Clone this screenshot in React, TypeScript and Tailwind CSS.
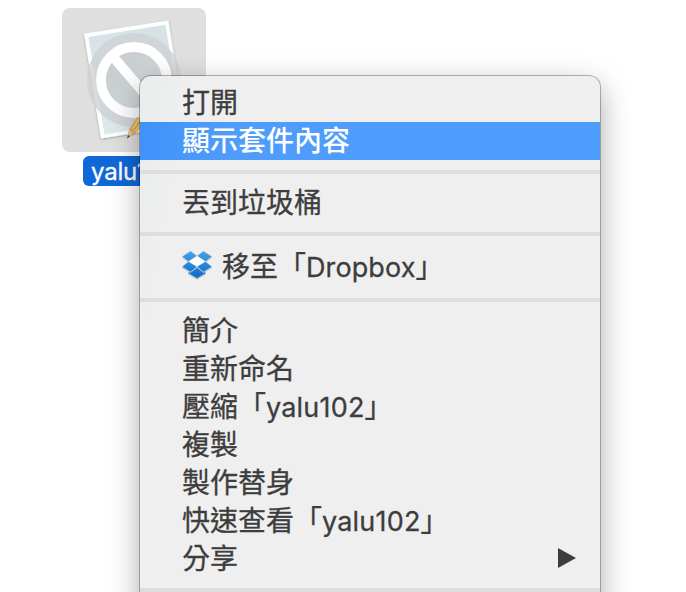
import React from "react";

function BundleIcon() {
  return (
    <svg viewBox="62 8 144 144" className="block h-36 w-36">
      <defs>
        <linearGradient id="paper" x1="0" y1="0" x2="0" y2="1">
          <stop offset="0" stopColor="#d6e2e6" />
          <stop offset="1" stopColor="#dce8eb" />
        </linearGradient>
        <linearGradient id="lens" x1="0" y1="0" x2="1" y2="1">
          <stop offset="0" stopColor="#c3c9cc" />
          <stop offset="1" stopColor="#d8dcde" />
        </linearGradient>
        <filter id="lift" x="-10%" y="-10%" width="120%" height="120%">
          <feDropShadow dx="0" dy="1" stdDeviation="1" floodOpacity="0.3" />
        </filter>
      </defs>
      <polygon points="84,33.8 168.3,20.5 185,125 101,138.5" fill="#fdfefe" filter="url(#lift)" />
      <polygon points="88.5,37 165.5,24.8 181,122 104.5,134.5" fill="url(#paper)" />
      <circle cx="134" cy="80" r="47" fill="#ced1d3" fillOpacity="0.8" />
      <circle cx="134" cy="80" r="33" fill="url(#lens)" stroke="#fff" strokeWidth="9.8" />
      <path d="M112 55.500L156 107" stroke="#fff" strokeWidth="9.8" />
      <path d="M137.500 117L146 122L135 134L127.500 138L129 129Z" fill="#ddb064" />
      <path d="M138 118L145 122L136 132L132 129Z" fill="#efce72" />
      <path d="M141 119.500L134 130" stroke="#bd9146" strokeWidth="1" />
      <path d="M129 130L133 133L127.500 138Z" fill="#e6c5a2" />
      <path d="M128 135L130 136.300L127 138.700Z" fill="#454545" />
    </svg>
  );
}

function DropboxIcon() {
  return (
    <svg viewBox="0 0 30 28" className="mr-[10px] block h-7 w-[30px] shrink-0 overflow-visible">
      <defs>
        <linearGradient id="box" x1="0" y1="0" x2="0" y2="28" gradientUnits="userSpaceOnUse">
          <stop offset="0" stopColor="#4ba0e7" />
          <stop offset="1" stopColor="#0868c9" />
        </linearGradient>
      </defs>
      <g stroke="#fff" strokeWidth="0.3" style={{ filter: "drop-shadow(0 1px 0.6px #0003)" }}>
        <path d="M15 5L24 10.500L15 16L6 10.500Z" fill="#fff" />
        <path d="M8.500 0L15 4.800L6.500 10.500L0 5.500Z" fill="url(#box)" />
        <path d="M21.500 0L30 5.500L23.500 10.500L15 4.800Z" fill="url(#box)" />
        <path d="M6.500 10.500L15 15.800L8.500 21L0 15.800Z" fill="url(#box)" />
        <path d="M23.500 10.500L30 15.800L21.500 21L15 15.800Z" fill="url(#box)" />
        <path d="M6.500 20.300L8.500 21.500L15 16.500L21.500 21.500L23.500 20.300V22.500L15 27.500L6.500 22.500Z" fill="url(#box)" />
      </g>
    </svg>
  );
}

function Latin({ children, className = "" }: { children: string; className?: string }) {
  return <span className={`font-['Inter'] text-[27px] leading-none ${className}`}>{children}</span>;
}

function Item({ children, className = "" }: { children: React.ReactNode; className?: string }) {
  return (
    <div className={`flex h-[38px] shrink-0 items-center whitespace-pre pb-1 pl-[42px] ${className}`}>{children}</div>
  );
}

function Separator() {
  return (
    <div className="flex h-6 shrink-0 items-center">
      <div className="h-1 w-full bg-[#dedede]" />
    </div>
  );
}

export default function App() {
  return (
    <div
      lang="zh-Hant"
      className="relative h-[592px] w-[686px] overflow-hidden bg-white font-['Noto_Sans_CJK_TC',sans-serif] text-[28px] leading-[38px] text-[#3d3d3d] [-webkit-text-stroke:0.3px]"
    >
      <div className="flex w-[206px] flex-col pl-[62px] pt-2">
        <div className="h-36 w-36 overflow-hidden rounded-lg bg-[#dfdfdf]">
          <BundleIcon />
        </div>
        <div className="ml-[21px] mt-1 h-[30px] w-[102px] rounded-md bg-[#1068d8] pl-2 font-['Inter'] text-[24px] leading-[31px] tracking-[-0.2px] text-white">
          yalu102
        </div>
      </div>

      <div className="absolute left-[140px] top-[76px] flex h-[560px] w-[460px] flex-col overflow-hidden rounded-t-[11px] bg-[#efefef] bg-[linear-gradient(100deg,#e9eded_0,#efefef_50px)] pt-2 shadow-[0_0_0_1px_#00000045,0_10px_30px_#00000058]">
        <Item>打開</Item>
        <Item className="bg-[#4e9cfb] bg-[linear-gradient(90deg,#4292fa,#4e9cfb_90px)] font-medium text-white [-webkit-text-stroke:0]">
          顯示套件內容
        </Item>
        <Separator />
        <Item>丟到垃圾桶</Item>
        <Separator />
        <Item className="h-[42px]!">
          <DropboxIcon />
          <span>移至「<Latin className="tracking-[0.1px]">Dropbox</Latin>」</span>
        </Item>
        <Separator />
        <Item>簡介</Item>
        <Item>重新命名</Item>
        <Item>
          <span>壓縮「<Latin className="tracking-[0.2px]">yalu102</Latin>」</span>
        </Item>
        <Item>複製</Item>
        <Item>製作替身</Item>
        <Item>
          <span>快速查看「<Latin className="tracking-[0.2px]">yalu102</Latin>」</span>
        </Item>
        <Item className="justify-between pr-6">
          <span>分享</span>
          <svg viewBox="0 0 18 20" className="mt-0.5 h-5 w-[18px]">
            <path d="M0 0L18 10L0 20Z" fill="#3d3d3d" />
          </svg>
        </Item>
        <Separator />
      </div>
    </div>
  );
}
